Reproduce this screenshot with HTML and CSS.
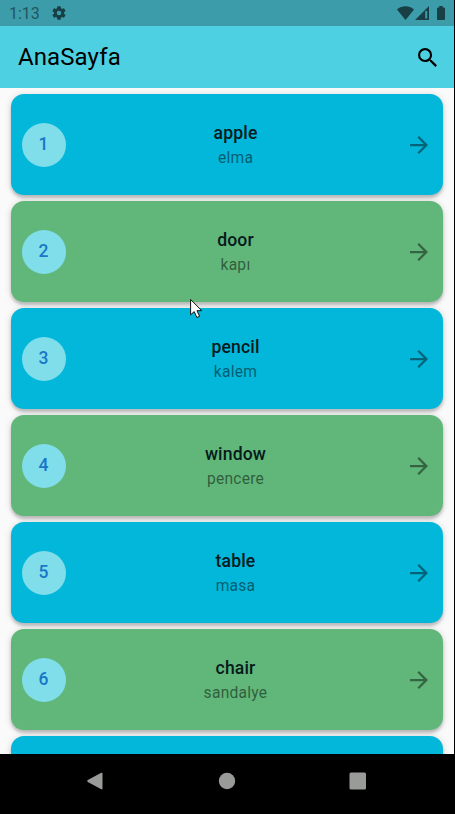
FILE: index.html
```html
<!DOCTYPE html>
<html lang="tr">
<head>
<meta charset="utf-8">
<title>AnaSayfa</title>
<link rel="stylesheet" href="styles.css">
</head>
<body>
<svg class="defs" width="0" height="0"><symbol id="arrow" viewBox="4 4 16 16"><path d="M12 4l-1.41 1.41L16.17 11H4v2h12.17l-5.58 5.59L12 20l8-8z"/></symbol></svg>
<div class="screen">
  <div class="status">
    <span class="time">1:13</span>
    <svg class="gear" viewBox="2 2 20 20"><path d="M19.14 12.94c.04-.3.06-.61.06-.94s-.02-.64-.07-.94l2.03-1.58a.49.49 0 0 0 .12-.61l-1.92-3.32a.49.49 0 0 0-.59-.22l-2.39.96a7 7 0 0 0-1.62-.94l-.36-2.54a.48.48 0 0 0-.48-.41h-3.84a.47.47 0 0 0-.47.41l-.36 2.54c-.59.24-1.13.57-1.62.94l-2.39-.96a.48.48 0 0 0-.59.22L2.74 8.87a.48.48 0 0 0 .12.61l2.03 1.58c-.05.3-.09.63-.09.94s.02.64.07.94l-2.03 1.58a.49.49 0 0 0-.12.61l1.92 3.32c.12.22.37.29.59.22l2.39-.96c.5.38 1.03.7 1.62.94l.36 2.54c.05.24.24.41.48.41h3.84c.24 0 .44-.17.47-.41l.36-2.54a7 7 0 0 0 1.62-.94l2.39.96c.22.08.47 0 .59-.22l1.92-3.32a.47.47 0 0 0-.12-.61zM12 15.2a3.200 3.200 0 1 1 0-6.400 3.200 3.200 0 0 1 0 6.400z"/></svg>
    <div class="indicators">
      <svg width="17" height="14" viewBox="0 0 17 14"><path d="M0 3.4C4.8-.8 12.200-.8 17 3.400L8.500 14z"/></svg>
      <svg width="14" height="14" viewBox="0 0 14 14"><path d="M0 14L14 0v14zM10.200 5v7.500h2V5z" fill-rule="evenodd"/></svg>
      <svg class="battery" width="8" height="14" viewBox="0 0 8 14"><path d="M2.200 0h3.600v1.400H7a1 1 0 0 1 1 1V13a1 1 0 0 1-1 1H1a1 1 0 0 1-1-1V2.400a1 1 0 0 1 1-1h1.200z"/></svg>
    </div>
  </div>
  <header class="appbar">
    <h1>AnaSayfa</h1>
    <svg class="search" viewBox="3 3 17.500 17.500"><path d="M15.500 14h-.79l-.28-.27A6.470 6.470 0 0 0 16 9.500 6.500 6.500 0 1 0 9.500 16c1.610 0 3.090-.59 4.230-1.570l.27.28v.79l5 4.990L20.490 19l-4.990-5zm-6 0C7.010 14 5 11.990 5 9.500S7.010 5 9.500 5 14 7.010 14 9.500 11.990 14 9.500 14z"/></svg>
  </header>
  <main class="list">
    <div class="card"><span class="num">1</span><div class="words"><b>apple</b><span>elma</span></div><svg class="arrow"><use href="#arrow"/></svg></div>
    <div class="card green"><span class="num">2</span><div class="words"><b>door</b><span>kapı</span></div><svg class="arrow"><use href="#arrow"/></svg></div>
    <div class="card"><span class="num">3</span><div class="words"><b>pencil</b><span>kalem</span></div><svg class="arrow"><use href="#arrow"/></svg></div>
    <div class="card green"><span class="num">4</span><div class="words"><b>window</b><span>pencere</span></div><svg class="arrow"><use href="#arrow"/></svg></div>
    <div class="card"><span class="num">5</span><div class="words"><b>table</b><span>masa</span></div><svg class="arrow"><use href="#arrow"/></svg></div>
    <div class="card green"><span class="num">6</span><div class="words"><b>chair</b><span>sandalye</span></div><svg class="arrow"><use href="#arrow"/></svg></div>
    <div class="card"></div>
  </main>
</div>
<nav class="navbar">
  <svg viewBox="0 0 18 18"><path d="M1.800 8.100L15.300.8q1.200-.5 1.200.5v15.400q0 1-1.200.5L1.800 9.900q-1.400-.9 0-1.800z"/></svg>
  <svg viewBox="0 0 18 18"><circle cx="9" cy="9" r="8.200"/></svg>
  <svg viewBox="0 0 18 18"><rect x=".5" y=".5" width="16.500" height="17" rx="1.500"/></svg>
</nav>
<svg class="cursor" viewBox="0 0 13 20"><path d="M.6 1v15.300l3.600-3.200 2.700 5.900 2.700-1.200-2.600-5.600h4.800z"/></svg>
</body>
</html>
```
FILE: styles.css
```css
* { box-sizing: border-box; }
body {
  margin: 0;
  width: 455px;
  height: 814px;
  overflow: hidden;
  background: #000;
  font-family: Roboto, sans-serif;
}
svg { display: block; flex: none; }
.defs { position: absolute; }
.screen {
  width: 454px;
  height: 754px;
  overflow: hidden;
  background: #fafafa;
  display: flex;
  flex-direction: column;
}
.status {
  flex: none;
  height: 26px;
  padding: 0 9px;
  display: flex;
  align-items: center;
  background: #3d9caa;
  color: #1f5660;
  fill: #183f45;
}
.time { width: 43px; font-size: 16px; line-height: 26px; padding-top: 2px; letter-spacing: 0; }
.gear { width: 14px; height: 14px; }
.indicators { margin-left: auto; display: flex; gap: 1px; }
.battery { margin-left: 7px; }
.appbar {
  flex: none;
  height: 62px;
  padding: 0 17px 0 18px;
  display: flex;
  align-items: center;
  justify-content: space-between;
  background: #4dd0e1;
}
h1 { margin: 0; font-size: 24px; font-weight: 400; line-height: 30px; letter-spacing: .1px; }
.search { width: 19px; height: 19px; }
.list {
  padding: 6px 11px 0;
  display: flex;
  flex-direction: column;
  gap: 6px;
}
.card {
  flex: none;
  height: 101px;
  padding: 0 15px 0 11px;
  border-radius: 13px;
  display: flex;
  align-items: center;
  background: #03b7da;
  box-shadow: 0 3px 3px rgba(0,0,0,.18), 0 1px 7px rgba(0,0,0,.16);
}
.green { background: #60b779; }
.num {
  width: 44px;
  height: 44px;
  border-radius: 50%;
  background: #80deea;
  color: #1976c8;
  font-size: 17.5px;
  font-weight: 500;
  line-height: 43px;
  text-align: center;
  padding-right: 1px;
}
.words {
  flex: 1;
  display: flex;
  flex-direction: column;
  align-items: center;
  padding: 3px 5px 0 0;
}
.words b { font-size: 17.6px; font-weight: 500; line-height: 25px; letter-spacing: .15px; color: #071a1c; }
.words span { font-size: 15.6px; line-height: 25px; letter-spacing: .25px; color: rgba(0,0,0,.5); }
.arrow { width: 18px; height: 18px; fill: rgba(0,0,0,.45); }
.navbar {
  height: 60px;
  padding: 0 88px 8px 86px;
  display: flex;
  align-items: center;
  justify-content: space-between;
  fill: #999b99;
}
.navbar svg { width: 18px; height: 18px; margin-top: 1px; }
.cursor {
  position: absolute;
  left: 190px;
  top: 298px;
  width: 13px;
  height: 21px;
  fill: #fff;
  stroke: #111;
  stroke-width: 1;
}
```
